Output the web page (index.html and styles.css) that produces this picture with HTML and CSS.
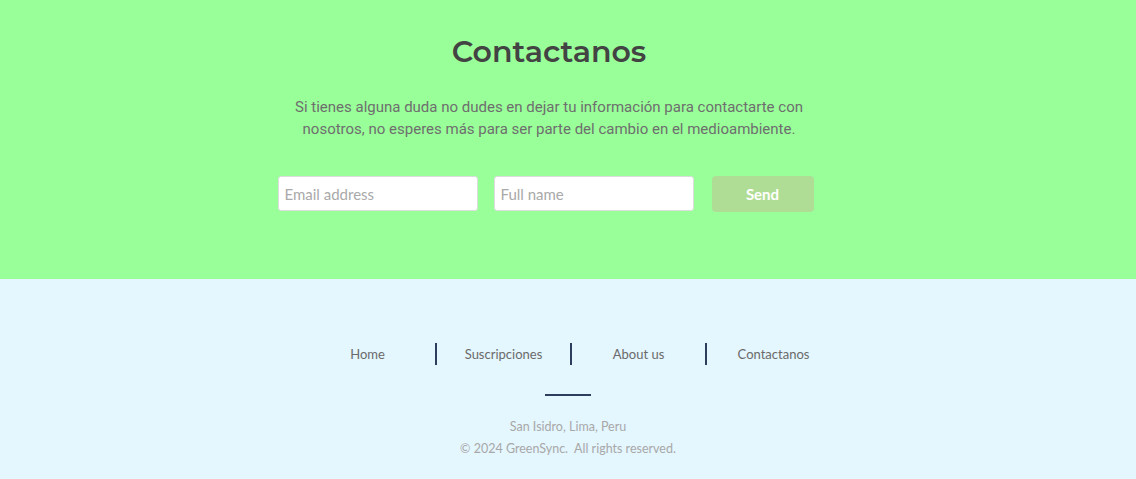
FILE: index.html
```
<!DOCTYPE html>
<html lang="es">
<head>
<meta charset="utf-8">
<title>Contactanos</title>
<link rel="stylesheet" href="styles.css">
</head>
<body>
<section class="contact">
  <h1 class="contact-title">Contactanos</h1>
  <p class="contact-text">Si tienes alguna duda no dudes en dejar tu información para contactarte con nosotros, no esperes más para ser parte del cambio en el medioambiente.</p>
  <form class="contact-form">
    <input class="field" type="email" placeholder="Email address">
    <input class="field" type="text" placeholder="Full name">
    <button class="send" type="button">Send</button>
  </form>
</section>
<footer class="footer">
  <ul class="footer-nav">
    <li class="nav-item">Home</li>
    <li class="nav-item">Suscripciones</li>
    <li class="nav-item">About us</li>
    <li class="nav-item">Contactanos</li>
  </ul>
  <div class="footer-rule"></div>
  <p class="footer-line">San Isidro, Lima, Peru</p>
  <p class="footer-line">© 2024 GreenSync.&nbsp; All rights reserved.</p>
</footer>
</body>
</html>
```
FILE: styles.css
```
* { box-sizing: border-box; }
html, body { margin: 0; padding: 0; }
body { font-family: "Source Sans Pro", Lato, "Liberation Sans", sans-serif; background: #e4f6fe; }

.contact {
  background: #99ff99;
  padding: 32px 38px 67px 0;
  display: flex;
  flex-direction: column;
  align-items: center;
}
.contact-title {
  margin: 0;
  font-family: "Montserrat", Inter, "Open Sans", sans-serif;
  font-weight: 600;
  font-size: 30px;
  line-height: 40px;
  color: #434343;
}
.contact-text {
  margin: 24px 0 0;
  width: 540px;
  text-align: center;
  font-family: Roboto, "Liberation Sans", sans-serif;
  font-size: 15px;
  line-height: 22px;
  color: #6e6e6e;
}
.contact-form {
  margin-top: 36px;
  margin-right: 7px;
  display: flex;
  align-items: flex-start;
  gap: 16px;
}
.field {
  width: 200px;
  height: 35px;
  border: 1px solid #dcdcdc;
  border-radius: 3px;
  background: #fff;
  padding: 0 6px;
  font-family: "Source Sans Pro", Lato, sans-serif;
  font-size: 15px;
  color: #333;
  outline: none;
}
.field::placeholder { color: #a9a9a9; }
.send {
  margin-left: 2px;
  width: 102px;
  height: 36px;
  border: 0;
  border-radius: 4px;
  background: #b0dd95;
  color: #fff;
  font-family: "Source Sans Pro", Lato, sans-serif;
  font-weight: 700;
  font-size: 15px;
}

.footer {
  padding: 64px 0 20px;
  display: flex;
  flex-direction: column;
  align-items: center;
}
.footer-nav {
  list-style: none;
  margin: 0;
  padding: 0 0 0 4px;
  display: flex;
}
.nav-item {
  width: 135px;
  height: 22px;
  line-height: 22px;
  text-align: center;
  font-size: 13px;
  color: #6a6a6a;
}
.nav-item + .nav-item { border-left: 2px solid #2b3f5c; }
.footer-rule {
  margin-top: 29px;
  width: 46px;
  height: 2px;
  background: #2b3f5c;
}
.footer-line {
  margin: 0;
  line-height: 22px;
  font-size: 12.5px;
  color: #a8a8a8;
}
.footer-rule + .footer-line { margin-top: 20px; }
```
